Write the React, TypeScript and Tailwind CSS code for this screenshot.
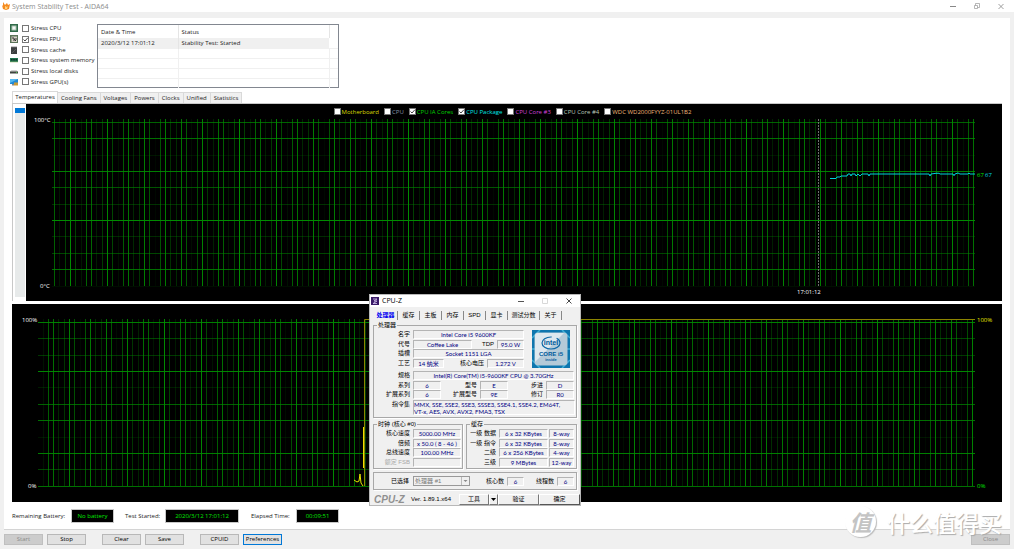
import { useState, type ReactNode } from "react";
import { clsx } from "clsx";

const SCALE = 1014 / 1920;

interface GridLine {
  pos: number;
  strength: number;
}

// Grid lines sit every 10 units on the 1920 wide desktop, so their brightness varies once scaled
const getVerticalLines = (first: number, origin: number): GridLine[] => {
  const lines: GridLine[] = [];
  for (let p = first; p <= 1845; p += 10) {
    const x = Math.round((p + 0.5) * SCALE - 0.5);
    const distance = Math.abs((x + 0.5) / SCALE - 0.5 - p);
    lines.push({ pos: x - origin, strength: Math.max(0, 1 - distance) });
  }
  return lines;
};

const TEMP_ROWS: GridLine[] = [
  { pos: 3, strength: 0.7 },
  { pos: 19, strength: 0.8 },
  { pos: 36, strength: 0.15 },
  { pos: 52, strength: 0.9 },
  { pos: 68, strength: 0.6 },
  { pos: 85, strength: 0.35 },
  { pos: 101, strength: 1 },
  { pos: 117, strength: 0.3 },
  { pos: 134, strength: 0.5 },
  { pos: 150, strength: 0.8 },
  { pos: 167, strength: 0.1 },
];

const USAGE_ROWS: GridLine[] = [
  { pos: 18, strength: 0.9 },
  { pos: 34, strength: 0.5 },
  { pos: 51, strength: 0.4 },
  { pos: 67, strength: 0.95 },
  { pos: 83, strength: 0.2 },
  { pos: 100, strength: 0.7 },
  { pos: 116, strength: 0.8 },
  { pos: 133, strength: 0.15 },
  { pos: 149, strength: 0.9 },
  { pos: 165, strength: 0.5 },
  { pos: 182, strength: 0.8 },
];

const TABS = ["Cooling Fans", "Voltages", "Powers", "Clocks", "Unified", "Statistics"];

const SENSORS = [
  { name: "Motherboard", color: "text-[#d8d800]", checked: false },
  { name: "CPU", color: "text-[#8490a8]", checked: false },
  { name: "CPU IA Cores", color: "text-[#00d000]", checked: true },
  { name: "CPU Package", color: "text-[#00e8e8]", checked: true },
  { name: "CPU Core #3", color: "text-[#d040d8]", checked: false },
  { name: "CPU Core #4", color: "text-[#b8c8b8]", checked: false },
  { name: "WDC WD2000FYYZ-01UL1B2", color: "text-[#f0b878]", checked: false },
];

const Tick = ({ id, defaultChecked }: { id: string; defaultChecked?: boolean }) => {
  const [checked, setChecked] = useState(!!defaultChecked);
  return (
    <span className="grid size-[7px] shrink-0">
      <input
        id={id}
        type="checkbox"
        checked={checked}
        onChange={(e) => setChecked(e.target.checked)}
        className="col-start-1 row-start-1 size-[7px] appearance-none border border-[#777] bg-white"
      />
      {checked && (
        <svg viewBox="0 0 7 7" className="pointer-events-none col-start-1 row-start-1 size-[7px]">
          <path d="M1.5 3.5 3 5 5.8 1.8" fill="none" stroke="#333" strokeWidth="0.9" />
        </svg>
      )}
    </span>
  );
};

const STRESS_ITEMS: { name: string; checked?: boolean; icon: ReactNode }[] = [
  {
    name: "Stress CPU",
    icon: (
      <>
        <rect width="8" height="8" fill="#2f6a48" />
        <rect x="1.5" y="1.5" width="5" height="5" fill="#a9c4b0" />
        <rect x="2.5" y="2.5" width="3" height="3" fill="#f4f4f4" />
      </>
    ),
  },
  {
    name: "Stress FPU",
    checked: true,
    icon: (
      <>
        <rect width="8" height="8" fill="#5b7458" />
        <rect x="1.5" y="1.5" width="5.5" height="5.5" fill="#d8d4c8" />
        <path d="M2 3h2v3M4 4l2 2M6 3v2" fill="none" stroke="#343434" />
      </>
    ),
  },
  {
    name: "Stress cache",
    icon: (
      <>
        <rect x="1" y="1" width="6" height="7" fill="#3c3f40" />
        <path d="M2 0v2M4 0v2M6 0v2" stroke="#777" strokeWidth="0.8" />
        <path d="M2 7 6 3" stroke="#666" strokeWidth="0.8" />
      </>
    ),
  },
  {
    name: "Stress system memory",
    icon: (
      <>
        <rect y="2" width="8" height="4" fill="#1f7650" />
        <path d="M1 3h1.5v1.5H1zM3.3 3h1.5v1.5H3.3zM5.6 3h1.5v1.5H5.6z" fill="#153028" />
        <path d="M0 6h8" stroke="#a7b87a" strokeWidth="0.6" />
      </>
    ),
  },
  {
    name: "Stress local disks",
    icon: (
      <>
        <path d="M1.5 3h5L8 5H0z" fill="#d0d0d0" />
        <rect y="4.5" width="8" height="2" fill="#3f4440" />
        <rect x="6" y="5" width="1" height="1" fill="#49c049" />
      </>
    ),
  },
  {
    name: "Stress GPU(s)",
    icon: (
      <>
        <rect y="1" width="8" height="5" fill="#1f8ad8" />
        <path d="M0 1h8L0 5z" fill="#55b9f0" />
        <rect x="2" y="6" width="2" height="1.5" fill="#888" />
        <rect x="4" y="4.5" width="4" height="3" fill="#c79a3a" />
      </>
    ),
  },
];

const GridLines = ({
  columns,
  rows,
  left,
  top,
  bottom,
  right,
}: {
  columns: GridLine[];
  rows: GridLine[];
  left: number;
  top: number;
  bottom: number;
  right: number;
}) => (
  <g fill="#008c00" shapeRendering="crispEdges">
    {columns.map((line) => (
      <rect key={line.pos} x={line.pos} y={top} width={1} height={bottom - top} opacity={line.strength} />
    ))}
    {rows.map((line) => (
      <rect key={line.pos} x={left} y={line.pos} width={right - left} height={1} opacity={line.strength} />
    ))}
  </g>
);

const TemperatureChart = () => (
  <div className="flex-1 bg-black">
    <div className="flex h-[15px] items-center justify-center gap-[5px] pr-[3px]">
      {SENSORS.map((sensor) => (
        <label
          key={sensor.name}
          htmlFor={sensor.name}
          className={clsx("flex items-center gap-px text-[6px] leading-[8px] whitespace-nowrap", sensor.color)}
        >
          <Tick id={sensor.name} defaultChecked={sensor.checked} />
          {sensor.name}
        </label>
      ))}
    </div>
    <svg viewBox="0 0 976 182" className="block w-full overflow-visible">
      <GridLines columns={getVerticalLines(103, 26)} rows={TEMP_ROWS} left={26} right={949} top={0} bottom={167} />
      <path d="M792.5 0v167" stroke="#707070" strokeDasharray="2 1" shapeRendering="crispEdges" />
      <path
        d="M804 59.5h6l1-1.5h3l1-1h6l1-2h2l1 2 1-2h3l1 2 2-2 2 2 2-2h6l1 2 1-2h59l1 2 1-2 5-.7h3l1 .7h13l1 1.7 1-1.7 3-1 2 1h8l1-1 1 1h5"
        fill="none"
        stroke="#00d0dc"
      />
      <g fontSize="6" fill="#fff">
        <text x="8" y="3">100°C</text>
        <text x="14" y="169">0°C</text>
        <text x="771" y="175">17:01:12</text>
        <text x="951" y="58" fill="#00e000">67</text>
        <text x="959" y="58" fill="#00d8e0">67</text>
      </g>
    </svg>
  </div>
);

const UsageChart = () => (
  <svg viewBox="0 0 990 198" className="block w-full bg-black">
    <GridLines columns={getVerticalLines(81, 12)} rows={USAGE_ROWS} left={26} right={963} top={15} bottom={182} />
    <path d="M352.5 182V15.5H963" fill="none" stroke="#8c8400" />
    <path d="M342 176l3 2 2-1 1-7 1 9 2 3" fill="none" stroke="#e8e800" />
    <path d="M351.5 164v-41" stroke="#f0e000" />
    <g fontSize="6" fill="#fff">
      <text x="10" y="18">100%</text>
      <text x="16" y="184">0%</text>
      <text x="965" y="18" fill="#e8e800">100%</text>
      <text x="965" y="184" fill="#00e000">0%</text>
    </g>
  </svg>
);

const StatusValue = ({ className, children }: { className: string; children: ReactNode }) => (
  <output
    className={clsx("h-[14px] border border-[#c8c8c8] bg-black text-center leading-[12px] text-[#00e800]", className)}
  >
    {children}
  </output>
);

const FooterButton = ({
  children,
  className,
  disabled,
  focused,
}: {
  children: ReactNode;
  className?: string;
  disabled?: boolean;
  focused?: boolean;
}) => (
  <button
    disabled={disabled}
    className={clsx(
      "h-[11px] w-[39px] text-center leading-[9px]",
      disabled && "border border-[#bfbfbf] bg-[#cccccc] text-[#8a8a8a]",
      !disabled && "bg-[#e1e1e1] text-black",
      !disabled && (focused ? "ring-1 ring-[#0078d7] ring-inset" : "border border-[#b8b8b8]"),
      className
    )}
  >
    {children}
  </button>
);

const Field = ({ className, children }: { className: string; children?: ReactNode }) => (
  <span
    className={clsx(
      "block h-[9px] shrink-0 overflow-hidden border border-t-[#b4b4b4] border-r-white border-b-white border-l-[#b4b4b4] text-center font-['Lato','Noto_Sans_CJK_SC',sans-serif] leading-[7px] whitespace-nowrap text-[#000084]",
      className
    )}
  >
    {children}
  </span>
);

const Caption = ({ className, children }: { className: string; children: ReactNode }) => (
  <span className={clsx("shrink-0 pr-[3px] text-right leading-[9px] whitespace-nowrap", className)}>{children}</span>
);

const Group = ({ title, className, children }: { title?: string; className?: string; children: ReactNode }) => (
  <section className={clsx("border border-[#a8a8a8] shadow-[1px_1px_0_#fff]", className)}>
    {title && <h3 className="-mt-[5px] ml-[3px] w-fit bg-[#f0f0f0] px-px leading-[9px]">{title}</h3>}
    {children}
  </section>
);

const CACHES = [
  { level: "一级 数据", size: "6 x 32 KBytes", way: "8-way" },
  { level: "一级 指令", size: "6 x 32 KBytes", way: "8-way" },
  { level: "二级", size: "6 x 256 KBytes", way: "4-way" },
  { level: "三级", size: "9 MBytes", way: "12-way" },
];

const IntelBadge = () => (
  <svg viewBox="0 0 38 38" className="size-[38px] shrink-0">
    <rect width="38" height="38" fill="#0f76ae" />
    <path d="M0 8 8 0M0 30l8 8M30 0l8 8M30 38l8-8M0 19h4M34 19h4" stroke="#3fb0d8" strokeWidth="1.5" />
    <rect x="2.5" y="2.5" width="33" height="33" rx="4" fill="#b4cad8" />
    <path d="M6 3h26L3 32V6q0-3 3-3z" fill="#dde8ef" />
    <ellipse cx="19" cy="13" rx="9" ry="6" fill="none" stroke="#0c68a8" strokeWidth="1.2" strokeDasharray="36 5" />
    <g fill="#005a9c" textAnchor="middle" fontWeight="700">
      <text x="19" y="15" fontSize="7">intel</text>
      <text x="19" y="26" fontSize="6">CORE i5</text>
      <text x="19" y="31" fontSize="4">inside</text>
    </g>
  </svg>
);

const CpuZWindow = () => (
  <div className="absolute top-[294px] left-[369px] flex h-[212px] w-[212px] flex-col border border-[#b8b8b8] bg-[#f0f0f0] font-['Liberation_Sans','Noto_Sans_CJK_SC',sans-serif] text-[6px] text-black">
    <header className="flex h-[12px] items-center bg-white pl-px">
      <svg viewBox="0 0 8 8" className="size-[8px]">
        <rect width="8" height="8" fill="#3a1a68" />
        <path d="M2 2h4L3 4h3L2 6.5h4" fill="none" stroke="#d8c8f0" strokeWidth="0.8" />
      </svg>
      <h2 className="ml-[3px] flex-1 font-['Open_Sans',sans-serif] text-[7px] leading-[10px]">CPU-Z</h2>
      <button aria-label="Minimize" className="w-6">
        <svg viewBox="0 0 24 8" className="w-6">
          <path d="M10 4.5h6" stroke="#555" />
        </svg>
      </button>
      <button aria-label="Maximize" className="w-6">
        <svg viewBox="0 0 24 8" className="w-6">
          <path d="M10.5 1.5h5v5h-5z" fill="none" stroke="#d8d8d8" />
        </svg>
      </button>
      <button aria-label="Close CPU-Z" className="w-6">
        <svg viewBox="0 0 24 8" className="w-6">
          <path d="M10.5 1.5l5 5M15.5 1.5l-5 5" stroke="#333" strokeWidth="0.9" />
        </svg>
      </button>
    </header>

    <nav className="mt-[4px] ml-[4px] flex leading-[9px]">
      {["处理器", "缓存", "主板", "内存", "SPD", "显卡", "测试分数", "关于"].map((tab, i) => (
        <button
          key={tab}
          className={clsx(
            "border-r border-[#888] text-center whitespace-nowrap",
            i === 0 && "w-[24px] font-bold text-[#0000f0]",
            i > 0 && i < 6 && "w-[22px]",
            i === 6 && "w-[32px]",
            i === 7 && "w-[22px]"
          )}
        >
          {tab}
        </button>
      ))}
    </nav>

    <Group title="处理器" className="mx-[3px] mt-[5px] h-[93px]">
      <div className="flex">
        <div className="flex h-[38px] flex-col justify-between">
          <div className="flex">
            <Caption className="w-[39px]">名字</Caption>
            <Field className="w-[111px]">Intel Core i5 9600KF</Field>
          </div>
          <div className="flex">
            <Caption className="w-[39px]">代号</Caption>
            <Field className="w-[59px]">Coffee Lake</Field>
            <Caption className="w-[25px]">TDP</Caption>
            <Field className="w-[27px]">95.0 W</Field>
          </div>
          <div className="flex">
            <Caption className="w-[39px]">插槽</Caption>
            <Field className="w-[111px]">Socket 1151 LGA</Field>
          </div>
          <div className="flex">
            <Caption className="w-[39px]">工艺</Caption>
            <Field className="w-[31px]">14 纳米</Field>
            <Caption className="w-[43px]">核心电压</Caption>
            <Field className="w-[37px]">1.272 V</Field>
          </div>
        </div>
        <div className="ml-[8px]">
          <IntelBadge />
        </div>
      </div>
      <div className="mt-[3px] flex h-[28px] flex-col justify-between">
        <div className="flex">
          <Caption className="w-[39px]">规格</Caption>
          <Field className="w-[161px]">Intel(R) Core(TM) i5-9600KF CPU @ 3.70GHz</Field>
        </div>
        <div className="flex">
          <Caption className="w-[39px]">系列</Caption>
          <Field className="w-[28px]">6</Field>
          <Caption className="w-[39px]">型号</Caption>
          <Field className="w-[28px]">E</Field>
          <Caption className="w-[38px]">步进</Caption>
          <Field className="w-[28px]">D</Field>
        </div>
        <div className="flex">
          <Caption className="w-[39px]">扩展系列</Caption>
          <Field className="w-[28px]">6</Field>
          <Caption className="w-[39px]">扩展型号</Caption>
          <Field className="w-[28px]">9E</Field>
          <Caption className="w-[38px]">修订</Caption>
          <Field className="w-[28px]">R0</Field>
        </div>
      </div>
      <div className="mt-px flex">
        <Caption className="w-[39px]">指令集</Caption>
        <p className="h-[15px] w-[162px] border border-t-[#b4b4b4] border-r-white border-b-white border-l-[#b4b4b4] font-['Lato',sans-serif] leading-[7px] text-[#000084]">
          MMX, SSE, SSE2, SSE3, SSSE3, SSE4.1, SSE4.2, EM64T, <span className="whitespace-nowrap">VT-x,</span> AES,
          AVX, AVX2, FMA3, TSX
        </p>
      </div>
    </Group>

    <div className="mx-[3px] mt-[6px] flex gap-[3px]">
      <Group title="时钟 (核心 #0)" className="h-[45px] w-[90px]">
        <div className="flex h-[38px] flex-col justify-between">
          <div className="flex">
            <Caption className="w-[39px]">核心速度</Caption>
            <Field className="w-[48px]">5000.00 MHz</Field>
          </div>
          <div className="flex">
            <Caption className="w-[39px]">倍频</Caption>
            <Field className="w-[48px]">x 50.0 ( 8 - 46 )</Field>
          </div>
          <div className="flex">
            <Caption className="w-[39px]">总线速度</Caption>
            <Field className="w-[48px]">100.00 MHz</Field>
          </div>
          <div className="flex">
            <Caption className="w-[39px] text-[#a8a8a8]">额定 FSB</Caption>
            <Field className="w-[48px]" />
          </div>
        </div>
      </Group>
      <Group title="缓存" className="h-[45px] flex-1">
        <div className="flex h-[38px] flex-col justify-between">
          {CACHES.map((cache) => (
            <div key={cache.level} className="flex">
              <Caption className="w-[32px]">{cache.level}</Caption>
              <Field className="w-[49px]">{cache.size}</Field>
              <Field className="ml-px w-[25px]">{cache.way}</Field>
            </div>
          ))}
        </div>
      </Group>
    </div>

    <Group className="mx-[3px] mt-[3px] flex h-[18px] items-center">
      <label htmlFor="cpu-select" className="w-[39px] pr-[4px] text-right">
        已选择
      </label>
      <span className="grid w-[57px]">
        <select
          id="cpu-select"
          disabled
          className="col-start-1 row-start-1 h-[10px] appearance-none border border-[#999] bg-[#f0f0f0] pl-px leading-[8px] text-[#777]"
        >
          <option>处理器 #1</option>
        </select>
        <svg
          viewBox="0 0 8 8"
          className="pointer-events-none col-start-1 row-start-1 mr-px size-[8px] self-center justify-self-end"
        >
          <path d="M.5 0v8" stroke="#bbb" />
          <path d="M2.5 3h4l-2 2z" fill="#888" />
        </svg>
      </span>
      <Caption className="w-[37px]">核心数</Caption>
      <Field className="w-[17px]">6</Field>
      <Caption className="w-[33px]">线程数</Caption>
      <Field className="w-[17px]">6</Field>
    </Group>

    <footer className="mt-[4px] flex items-center pl-[4px] leading-[9px]">
      <strong className="w-[37px] text-[10px] text-[#909090] italic">CPU-Z</strong>
      <span className="w-[48px] whitespace-nowrap">Ver. 1.89.1.x64</span>
      <button className="h-[11px] w-[30px] border border-white border-r-[#777] border-b-[#777]">工具</button>
      <button
        aria-label="更多工具"
        className="grid h-[11px] w-[9px] place-items-center border border-white border-r-[#777] border-b-[#777]"
      >
        <svg viewBox="0 0 5 3" className="w-[5px]">
          <path d="M0 0h5L2.5 3z" />
        </svg>
      </button>
      <button className="h-[11px] w-[41px] border border-white border-r-[#777] border-b-[#777]">验证</button>
      <button className="h-[11px] flex-1 border border-white border-r-[#555] border-b-[#555]">确定</button>
    </footer>
  </div>
);

export default function App() {
  return (
    <div className="relative flex min-h-screen flex-col overflow-hidden bg-[#f0f0f0] font-['Open_Sans','Noto_Sans_CJK_SC',sans-serif] text-[6px] text-[#222]">
      <header className="flex h-[12px] items-center bg-white pl-[2px]">
        <svg viewBox="0 0 8 8" className="size-[8px]">
          <path d="M1 0 3 3 5 1l1 2 2-1-1 5-3 1-3-1-1-4 1 1z" fill="#f58a1f" />
          <path d="M3 4l2 1 1-1-1 3H3z" fill="#ffd27a" />
        </svg>
        <h1 className="ml-[2px] flex-1 text-[7px] leading-[11px] text-[#8c8c8c]">System Stability Test - AIDA64</h1>
        <button aria-label="Minimize window">
          <svg viewBox="0 0 24 10" className="w-6">
            <path d="M8 5.5h6" stroke="#888" />
          </svg>
        </button>
        <button aria-label="Restore window">
          <svg viewBox="0 0 24 10" className="w-6">
            <path d="M8.5 4.5h3v3h-3zM9.5 4.5v-2h4v4h-2" fill="none" stroke="#999" strokeWidth="0.7" />
          </svg>
        </button>
        <button aria-label="Close window">
          <svg viewBox="0 0 24 10" className="w-6">
            <path d="M8.5 3l5 5M13.5 3l-5 5" stroke="#888" strokeWidth="0.8" />
          </svg>
        </button>
      </header>

      <main className="mx-[4px] mt-[6px] flex flex-col border-b border-[#d4d4d4] bg-white pt-[5px] pr-[8px] pb-[6px]">
        <div className="flex h-[65px] gap-[3px] pl-[6px]">
          <div className="flex h-[64px] w-[84px] flex-col">
            {STRESS_ITEMS.map((item) => (
              <div key={item.name} className="flex flex-1 items-center">
                <svg viewBox="0 0 8 8" className="mr-[4px] size-[8px] shrink-0">
                  {item.icon}
                </svg>
                <Tick id={item.name} defaultChecked={item.checked} />
                <label htmlFor={item.name} className="pl-[2px] leading-[8px] whitespace-nowrap">
                  {item.name}
                </label>
              </div>
            ))}
          </div>
          <div className="mt-px w-[242px] border border-[#828790]">
            <table className="w-full table-fixed border-collapse text-left leading-[8px]">
              <thead>
                <tr className="h-[13px]">
                  <th className="w-[80px] border-r border-[#e5e5e5] pt-px pl-[3px] font-normal">Date &amp; Time</th>
                  <th className="w-[151px] border-r border-[#e5e5e5] pt-px pl-[3px] font-normal">Status</th>
                  <th />
                </tr>
              </thead>
              <tbody>
                <tr className="h-[10px] bg-[#f0f0f0]">
                  <td className="border-r border-[#e5e5e5] pt-px pl-[3px]">2020/3/12 17:01:12</td>
                  <td className="pt-px pl-[3px]">Stability Test: Started</td>
                  <td className="bg-white" />
                </tr>
                {[1, 2, 3, 4].map((row) => (
                  <tr key={row} className="h-[10px] border-t border-[#f0f0f0]">
                    <td className="border-r border-[#f0f0f0]" />
                    <td className="border-r border-[#f0f0f0]" />
                    <td />
                  </tr>
                ))}
              </tbody>
            </table>
          </div>
        </div>

        <div className="pl-[8px]">
          <nav className="mt-[3px] flex items-end leading-[9px]">
            <button className="h-[12px] w-[46px] border border-b-0 border-[#d9d9d9] bg-white text-center">
              Temperatures
            </button>
            {TABS.map((tab) => (
              <button
                key={tab}
                className="h-[11px] border border-b-0 border-l-0 border-[#d9d9d9] bg-[#f0f0f0] px-[3px] text-center whitespace-nowrap"
              >
                {tab}
              </button>
            ))}
          </nav>

          <div className="flex border-t border-l border-[#c8c8c8]">
            <div className="w-[13px] pt-[4px] pb-[4px]">
              <div className="mx-auto h-full w-[10px] bg-[#e7eaea]">
                <div className="h-[5px] bg-[#0078d7]" />
              </div>
            </div>
            <TemperatureChart />
          </div>
          <div className="mt-[3px]">
            <UsageChart />
          </div>

          <div className="mt-[7px] flex items-center leading-[9px] whitespace-nowrap">
            <span className="w-[59px]">Remaining Battery:</span>
            <StatusValue className="w-[43px]">No battery</StatusValue>
            <span className="ml-[11px] w-[40px]">Test Started:</span>
            <StatusValue className="w-[74px]">2020/3/12 17:01:12</StatusValue>
            <span className="ml-[12px] w-[45px]">Elapsed Time:</span>
            <StatusValue className="w-[43px]">00:09:51</StatusValue>
          </div>
        </div>
      </main>

      <footer className="mt-[4px] flex px-[4px]">
        <FooterButton disabled>Start</FooterButton>
        <FooterButton className="ml-[4px]">Stop</FooterButton>
        <FooterButton className="ml-[16px]">Clear</FooterButton>
        <FooterButton className="ml-[4px]">Save</FooterButton>
        <FooterButton className="ml-[16px]">CPUID</FooterButton>
        <FooterButton focused className="ml-[4px]">
          Preferences
        </FooterButton>
        <FooterButton disabled className="ml-auto">
          Close
        </FooterButton>
      </footer>

      <CpuZWindow />

      {/* Site watermark in the corner */}
      <div className="pointer-events-none absolute right-[12px] bottom-[12px] flex items-center gap-[11px] font-['Noto_Sans_CJK_SC',sans-serif] text-white [text-shadow:1px_1px_1px_#aaa]">
        <span className="size-[31px] rounded-full bg-white text-center text-[22px] leading-[30px] font-bold text-[#c4c4c4] italic shadow-[1px_1px_1px_#bbb] [text-shadow:none]">
          值
        </span>
        <span className="text-[23px] leading-[24px] font-medium">什么值得买</span>
      </div>
    </div>
  );
}
